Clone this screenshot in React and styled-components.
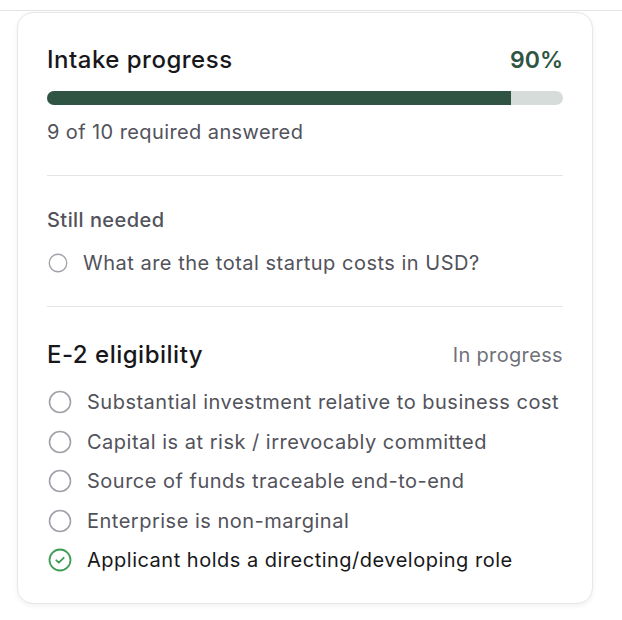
import React from 'react';
import styled, { createGlobalStyle } from 'styled-components';

const GlobalStyle = createGlobalStyle`
  * { box-sizing: border-box; }
  body {
    margin: 0;
    background: #ffffff;
    font-family: Inter, "Noto Sans", sans-serif;
    -webkit-font-smoothing: antialiased;
  }
`;

const progress = { answered: 9, required: 10 };

const stillNeeded = ['What are the total startup costs in USD?'];

const criteria = [
  { label: 'Substantial investment relative to business cost', done: false },
  { label: 'Capital is at risk / irrevocably committed', done: false },
  { label: 'Source of funds traceable end-to-end', done: false },
  { label: 'Enterprise is non-marginal', done: false },
  { label: 'Applicant holds a directing/developing role', done: true },
];

const EmptyCircle = ({ size }) => (
  <svg width={size} height={size} viewBox='0 0 24 24' fill='none'>
    <circle cx='12' cy='12' r='10.5' stroke='#a1a1aa' strokeWidth='1.6' />
  </svg>
);

const CheckCircle = ({ size }) => (
  <svg width={size} height={size} viewBox='0 0 24 24' fill='none'>
    <circle cx='12' cy='12' r='10.5' stroke='#3f9d55' strokeWidth='1.8' />
    <path
      d='M8.3 12.3l2.5 2.4 4.9-4.9'
      stroke='#3f9d55'
      strokeWidth='1.8'
      strokeLinecap='round'
      strokeLinejoin='round'
    />
  </svg>
);

const App = () => {
  const pct = Math.round((progress.answered / progress.required) * 100);

  return (
    <>
      <GlobalStyle />
      <SPage>
        <STopRule />
        <SCard>
          <SSection>
            <SHeaderRow>
              <STitle>Intake progress</STitle>
              <SPercent>{pct}%</SPercent>
            </SHeaderRow>
            <STrack>
              <SFill style={{ width: `${pct}%` }} />
            </STrack>
            <SMeta>
              {progress.answered} of {progress.required} required answered
            </SMeta>
          </SSection>

          <SDivider />

          <SSection $top={31}>
            <SLabel>Still needed</SLabel>
            <SList $gap={0} $mt={17}>
              {stillNeeded.map((q) => (
                <SItem key={q} $small>
                  <EmptyCircle size={20} />
                  <SItemText>{q}</SItemText>
                </SItem>
              ))}
            </SList>
          </SSection>

          <SDivider />

          <SSection $top={34}>
            <SHeaderRow>
              <STitle>E-2 eligibility</STitle>
              <SStatus>In progress</SStatus>
            </SHeaderRow>
            <SList $gap={11.5} $mt={19}>
              {criteria.map((c) => (
                <SItem key={c.label}>
                  {c.done ? <CheckCircle size={24} /> : <EmptyCircle size={24} />}
                  <SItemText $done={c.done}>{c.label}</SItemText>
                </SItem>
              ))}
            </SList>
          </SSection>
        </SCard>
      </SPage>
    </>
  );
};

export default App;

// Styled Components
const SPage = styled.div`
  width: 622px;
  height: 620px;
  overflow: hidden;
`;

const STopRule = styled.div`
  height: 11px;
  border-bottom: 1px solid #e4e4e7;
`;

const SCard = styled.div`
  width: 576px;
  margin: 1px 0 0 17px;
  padding: 0 29px 29px;
  background: #ffffff;
  border: 1px solid #e7e7ea;
  border-radius: 16px;
  box-shadow: 0 2px 5px rgba(0, 0, 0, 0.06);
`;

const SSection = styled.div`
  padding-top: ${({ $top }) => $top ?? 33}px;
  padding-bottom: 30px;

  &:last-child {
    padding-bottom: 0;
  }
`;

const SHeaderRow = styled.div`
  display: flex;
  align-items: center;
  justify-content: space-between;
`;

const STitle = styled.h2`
  margin: 0;
  color: #18181b;
  font-size: 24px;
  font-weight: 500;
  line-height: 28px;
  letter-spacing: 0.5px;
`;

const SPercent = styled.span`
  color: #2f5443;
  font-size: 23px;
  font-weight: 600;
  line-height: 28px;
`;

const STrack = styled.div`
  height: 14px;
  margin-top: 17px;
  border-radius: 7px;
  background: #d6dcd9;
  overflow: hidden;
`;

const SFill = styled.div`
  height: 100%;
  background: #2f5443;
`;

const SMeta = styled.p`
  margin: 14px 0 0;
  color: #52525b;
  font-size: 20px;
  line-height: 26px;
  letter-spacing: 0.4px;
`;

const SDivider = styled.hr`
  margin: 0;
  border: none;
  border-top: 1.5px solid #e4e4e7;
`;

const SLabel = styled.h3`
  margin: 0;
  color: #52525b;
  font-size: 20px;
  font-weight: 500;
  line-height: 26px;
  letter-spacing: 0.45px;
`;

const SStatus = styled.span`
  color: #71717a;
  font-size: 20px;
  line-height: 26px;
  letter-spacing: 0.35px;
`;

const SList = styled.ul`
  display: flex;
  flex-direction: column;
  gap: ${({ $gap }) => $gap}px;
  margin: ${({ $mt }) => $mt}px 0 0;
  padding: 0;
  list-style: none;
`;

const SItem = styled.li`
  display: flex;
  align-items: center;
  gap: 15px;
  height: ${({ $small }) => ($small ? 26 : 28)}px;
  padding-left: 1px;

  svg {
    flex-shrink: 0;
  }
`;

const SItemText = styled.span`
  color: ${({ $done }) => ($done ? '#18181b' : '#52525b')};
  font-size: 20px;
  line-height: 26px;
  letter-spacing: 0.5px;
  white-space: nowrap;
`;
